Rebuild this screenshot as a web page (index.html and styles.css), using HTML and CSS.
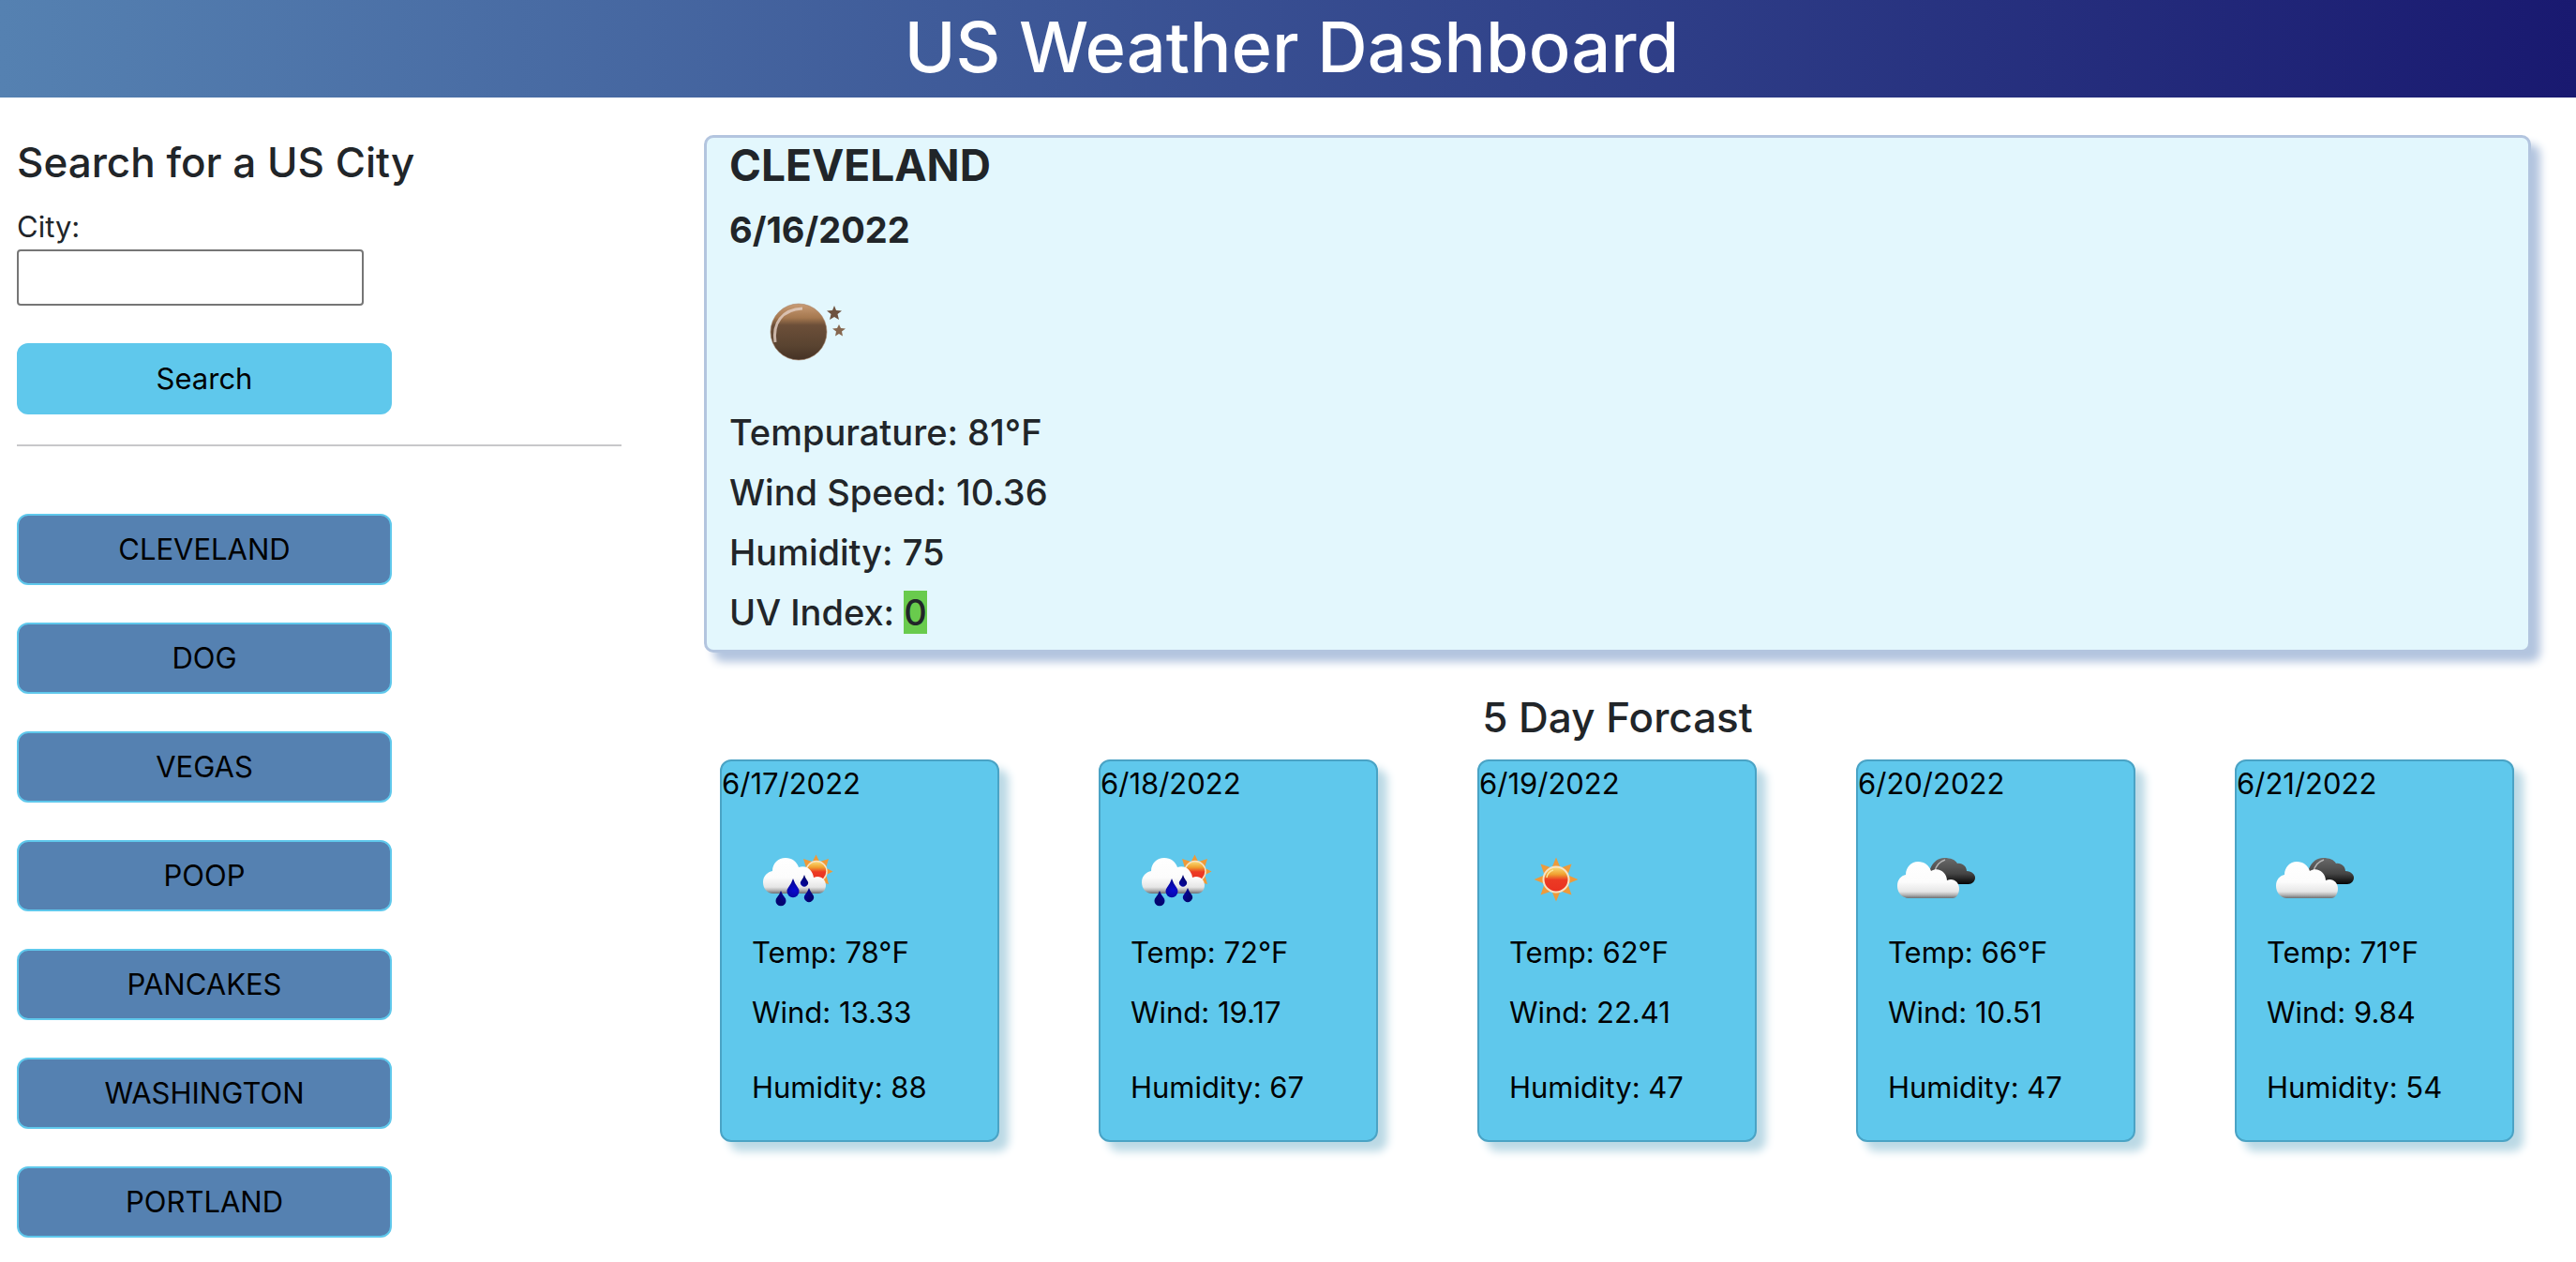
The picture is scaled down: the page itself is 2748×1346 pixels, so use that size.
FILE: index.html
```html
<!DOCTYPE html>
<html lang="en">
<head>
<meta charset="utf-8">
<meta name="viewport" content="width=device-width, initial-scale=1">
<title>US Weather Dashboard</title>
<link rel="stylesheet" href="styles.css">
</head>
<body>
<svg class="defs" aria-hidden="true">
  <defs>
    <linearGradient id="white-cloud" x1="0" y1="0" x2="0" y2="1">
      <stop offset="0" stop-color="#fff"/><stop offset=".55" stop-color="#fcfcfc"/><stop offset=".82" stop-color="#e6e6e6"/><stop offset=".91" stop-color="#b5b5b5"/><stop offset="1" stop-color="#6c7074"/>
    </linearGradient>
    <linearGradient id="dark-cloud" x1="0" y1="0" x2="0" y2="1">
      <stop offset="0" stop-color="#6a6a6a"/><stop offset=".6" stop-color="#454545"/><stop offset="1" stop-color="#050505"/>
    </linearGradient>
    <linearGradient id="sun-disc" x1="0" y1="0" x2="0" y2="1">
      <stop offset="0" stop-color="#fbe07a"/><stop offset=".3" stop-color="#f0a030"/><stop offset=".52" stop-color="#ec3a24"/><stop offset="1" stop-color="#ea3020"/>
    </linearGradient>
    <linearGradient id="moon-disc" x1="0" y1="0" x2="0" y2="1">
      <stop offset="0" stop-color="#c99c76"/><stop offset=".25" stop-color="#a5784f"/><stop offset=".38" stop-color="#6c4f39"/><stop offset=".75" stop-color="#594330"/><stop offset="1" stop-color="#453225"/>
    </linearGradient>
    <radialGradient id="drop">
      <stop offset="0" stop-color="#0a0ad0"/><stop offset="1" stop-color="#040470"/>
    </radialGradient>
    <symbol id="sun" viewBox="0 0 100 100">
      <path fill="#ee9a3a" d="M50 26.500l5 12h-10zM50 73.500l5-12h-10zM26.500 50l12-5v10zM73.500 50l-12-5v10zM33.500 33.500l11.500 4-7.500 7.500zM66.500 33.500l-11.500 4 7.500 7.500zM33.500 66.500l11.500-4-7.500-7.500zM66.500 66.500l-11.500-4 7.500-7.500z"/>
      <circle cx="50" cy="50" r="13.500" fill="url(#sun-disc)" stroke="#f8e3c4" stroke-width="2"/>
      <path d="M40 48a10 10 0 0 1 7-8" fill="none" stroke="#fbe59a" stroke-width="1.500"/>
    </symbol>
    <symbol id="rain" viewBox="0 0 100 100">
      <path fill="#ee9a3a" d="M68.500 23.500l5 10h-10zM86.500 41.500l-10-5v10zM82 28l-3.500 11-7.500-7.500zM55 28l3.500 11 7.500-7.500zM82 55l-3-11-8 8z"/>
      <circle cx="69" cy="41.500" r="11" fill="url(#sun-disc)" stroke="#f8e3c4" stroke-width="1.500"/>
      <path fill="url(#white-cloud)" d="M23 65C16 65 12 59 12 53C12 46 17 42 22 41C22 33 28 27 36 27C43 27 48 31 50 37C57 34 65 39 66 48C73 45 79 50 79 56C79 61 76 65 71 65Z"/>
      <path fill="url(#drop)" d="M31 62q1.500 4 4 7a5.500 5.500 0 1 1-8 0q2.500-3 4-7zM44 49q2 6 5 9.500a6.500 6.500 0 1 1-10 0q3-3.500 5-9.500zM56 45q1 3.500 3 6a4 4 0 1 1-6 0q2-2.500 3-6zM61 59q1.500 4 4 7a5 5 0 1 1-8 0q2.500-3 4-7z"/>
    </symbol>
    <symbol id="clouds" viewBox="2 0 100 100">
      <path fill="url(#dark-cloud)" d="M48 55C42 42 50 27 62 27C69 27 74 29 76 33C81 32 86 36 86 41C92 41 95 45 95 48C95 52 92 55 88 55Z"/>
      <path d="M52 42c1-7 5-11 11-13" fill="none" stroke="#b5b5b5" stroke-width="1.500"/>
      <path fill="url(#white-cloud)" d="M23 70C16 69 12 63 12 57C12 50 16 46 21 45C21 37 27 31 34 31C41 31 46 35 48 41C56 36 65 43 65 51C72 48 78 53 78 60C78 65 75 70 71 70Z"/>
    </symbol>
    <symbol id="moon" viewBox="0 0 150 150">
      <circle cx="74" cy="75" r="30" fill="url(#moon-disc)" stroke="#a9836a" stroke-opacity=".6" stroke-width="1"/>
      <path d="M49 86C46 66 56 51 78 50" fill="none" stroke="#e3cfc4" stroke-width="3" stroke-opacity=".8"/>
      <path fill="#6e523f" d="M112 47l2 5 6 .5-4.500 3.500 1.500 6-5-3-5 3 1.500-6-4.500-3.500 6-.5z"/>
      <path fill="#86674f" d="M117 67l2 4 5 .5-4 3 1 5-4-2.500-4 2.500 1-5-4-3 5-.5z"/>
    </symbol>
  </defs>
</svg>
<header class="header"><h1>US Weather Dashboard</h1></header>
<div class="layout">
  <aside class="sidebar">
    <form class="search">
      <h2>Search for a US City</h2>
      <label for="city">City:</label>
      <input id="city" type="text">
      <button class="btn btn-search" type="button">Search</button>
    </form>
    <hr>
    <div class="history">
      <button class="btn" type="button">CLEVELAND</button>
      <button class="btn" type="button">DOG</button>
      <button class="btn" type="button">VEGAS</button>
      <button class="btn" type="button">POOP</button>
      <button class="btn" type="button">PANCAKES</button>
      <button class="btn" type="button">WASHINGTON</button>
      <button class="btn" type="button">PORTLAND</button>
    </div>
  </aside>
  <main class="main">
    <section class="current">
      <h2 class="city">CLEVELAND</h2>
      <h3 class="date">6/16/2022</h3>
      <svg class="icon-lg" role="img" aria-label="Clear night"><use href="#moon"/></svg>
      <p>Tempurature: 81°F</p>
      <p>Wind Speed: 10.36</p>
      <p>Humidity: 75</p>
      <p>UV Index: <span class="uv">0</span></p>
    </section>
    <h2 class="forecast-title">5 Day Forcast</h2>
    <section class="forecast">
      <article class="card">
        <h3>6/17/2022</h3>
        <svg class="icon" role="img" aria-label="Rain"><use href="#rain"/></svg>
        <p>Temp: 78°F</p><p>Wind: 13.33</p><p class="humidity">Humidity: 88</p>
      </article>
      <article class="card">
        <h3>6/18/2022</h3>
        <svg class="icon" role="img" aria-label="Rain"><use href="#rain"/></svg>
        <p>Temp: 72°F</p><p>Wind: 19.17</p><p class="humidity">Humidity: 67</p>
      </article>
      <article class="card">
        <h3>6/19/2022</h3>
        <svg class="icon" role="img" aria-label="Clear"><use href="#sun"/></svg>
        <p>Temp: 62°F</p><p>Wind: 22.41</p><p class="humidity">Humidity: 47</p>
      </article>
      <article class="card">
        <h3>6/20/2022</h3>
        <svg class="icon" role="img" aria-label="Clouds"><use href="#clouds"/></svg>
        <p>Temp: 66°F</p><p>Wind: 10.51</p><p class="humidity">Humidity: 47</p>
      </article>
      <article class="card">
        <h3>6/21/2022</h3>
        <svg class="icon" role="img" aria-label="Clouds"><use href="#clouds"/></svg>
        <p>Temp: 71°F</p><p>Wind: 9.84</p><p class="humidity">Humidity: 54</p>
      </article>
    </section>
  </main>
</div>
</body>
</html>
```
FILE: styles.css
```css
* { box-sizing: border-box; }
body { margin: 0; background: #fff; color: #212529; font: 400 31px/48px Inter, "Liberation Sans", sans-serif; }
h1, h2, h3, p { margin: 0; }
.defs { display: block; width: 0; height: 0; }
.header { background: linear-gradient(to right, #5581b1, #191970); color: #fff; text-align: center; padding: 2px 0 6px 8px; }
.header h1 { font-size: 74px; line-height: 96px; font-weight: 500; }
.layout { display: grid; grid-template-columns: 1fr 3fr; padding-top: 40px; }
.sidebar { padding: 0 24px 26px 18px; }
.search { display: flex; flex-direction: column; align-items: flex-start; }
.search h2, .forecast-title { font-size: 44px; line-height: 58px; font-weight: 500; }
.search h2 { margin-bottom: 16px; }
.search input { width: 370px; height: 60px; padding: 2px 8px; border: 2px solid #767676; border-radius: 4px; background: #fff; font: inherit; }
.btn { width: 400px; height: 76px; padding: 0; border: 2px solid #5fc8ec; border-radius: 12px; background: #5581b1; color: #000; font: inherit; }
.btn-search { margin-top: 40px; background: #5fc8ec; }
hr { height: 2px; margin: 32px 0 72px; border: 0; background: #c8c8ca; }
.history { display: flex; flex-direction: column; gap: 40px; }
.main { padding: 0 48px 0 64px; }
.current { border: 3px solid #b3c5df; border-radius: 10px; padding: 0 24px; background: #e3f7fd; box-shadow: 10px 10px 10px #b3c5df; }
.city { font-size: 46px; line-height: 58px; font-weight: 700; margin-bottom: 16px; }
.date { font-size: 38px; line-height: 48px; font-weight: 700; margin-bottom: 10px; }
.icon-lg { display: block; width: 150px; height: 150px; margin-bottom: 8px; }
.current p { font-size: 38px; line-height: 48px; font-weight: 500; margin-bottom: 16px; }
.uv { background: #69cb4d; }
.forecast-title { text-align: center; margin: 40px 0 16px; }
.forecast { display: grid; grid-template-columns: repeat(5, 1fr); gap: 106px; padding: 0 18px 0 17px; }
.card { border: 2px solid #4aa3c5; border-radius: 12px; background: #5fc8ec; color: #000; box-shadow: 10px 10px 10px #bbd9e5; padding-bottom: 32px; }
.card h3 { font-size: 31px; line-height: 48px; font-weight: 400; }
.icon { display: block; width: 100px; height: 100px; margin: 28px 0 4px 32px; }
.card p { margin: 0 32px 16px; }
.card .humidity { margin: 32px 32px 0; }
```
